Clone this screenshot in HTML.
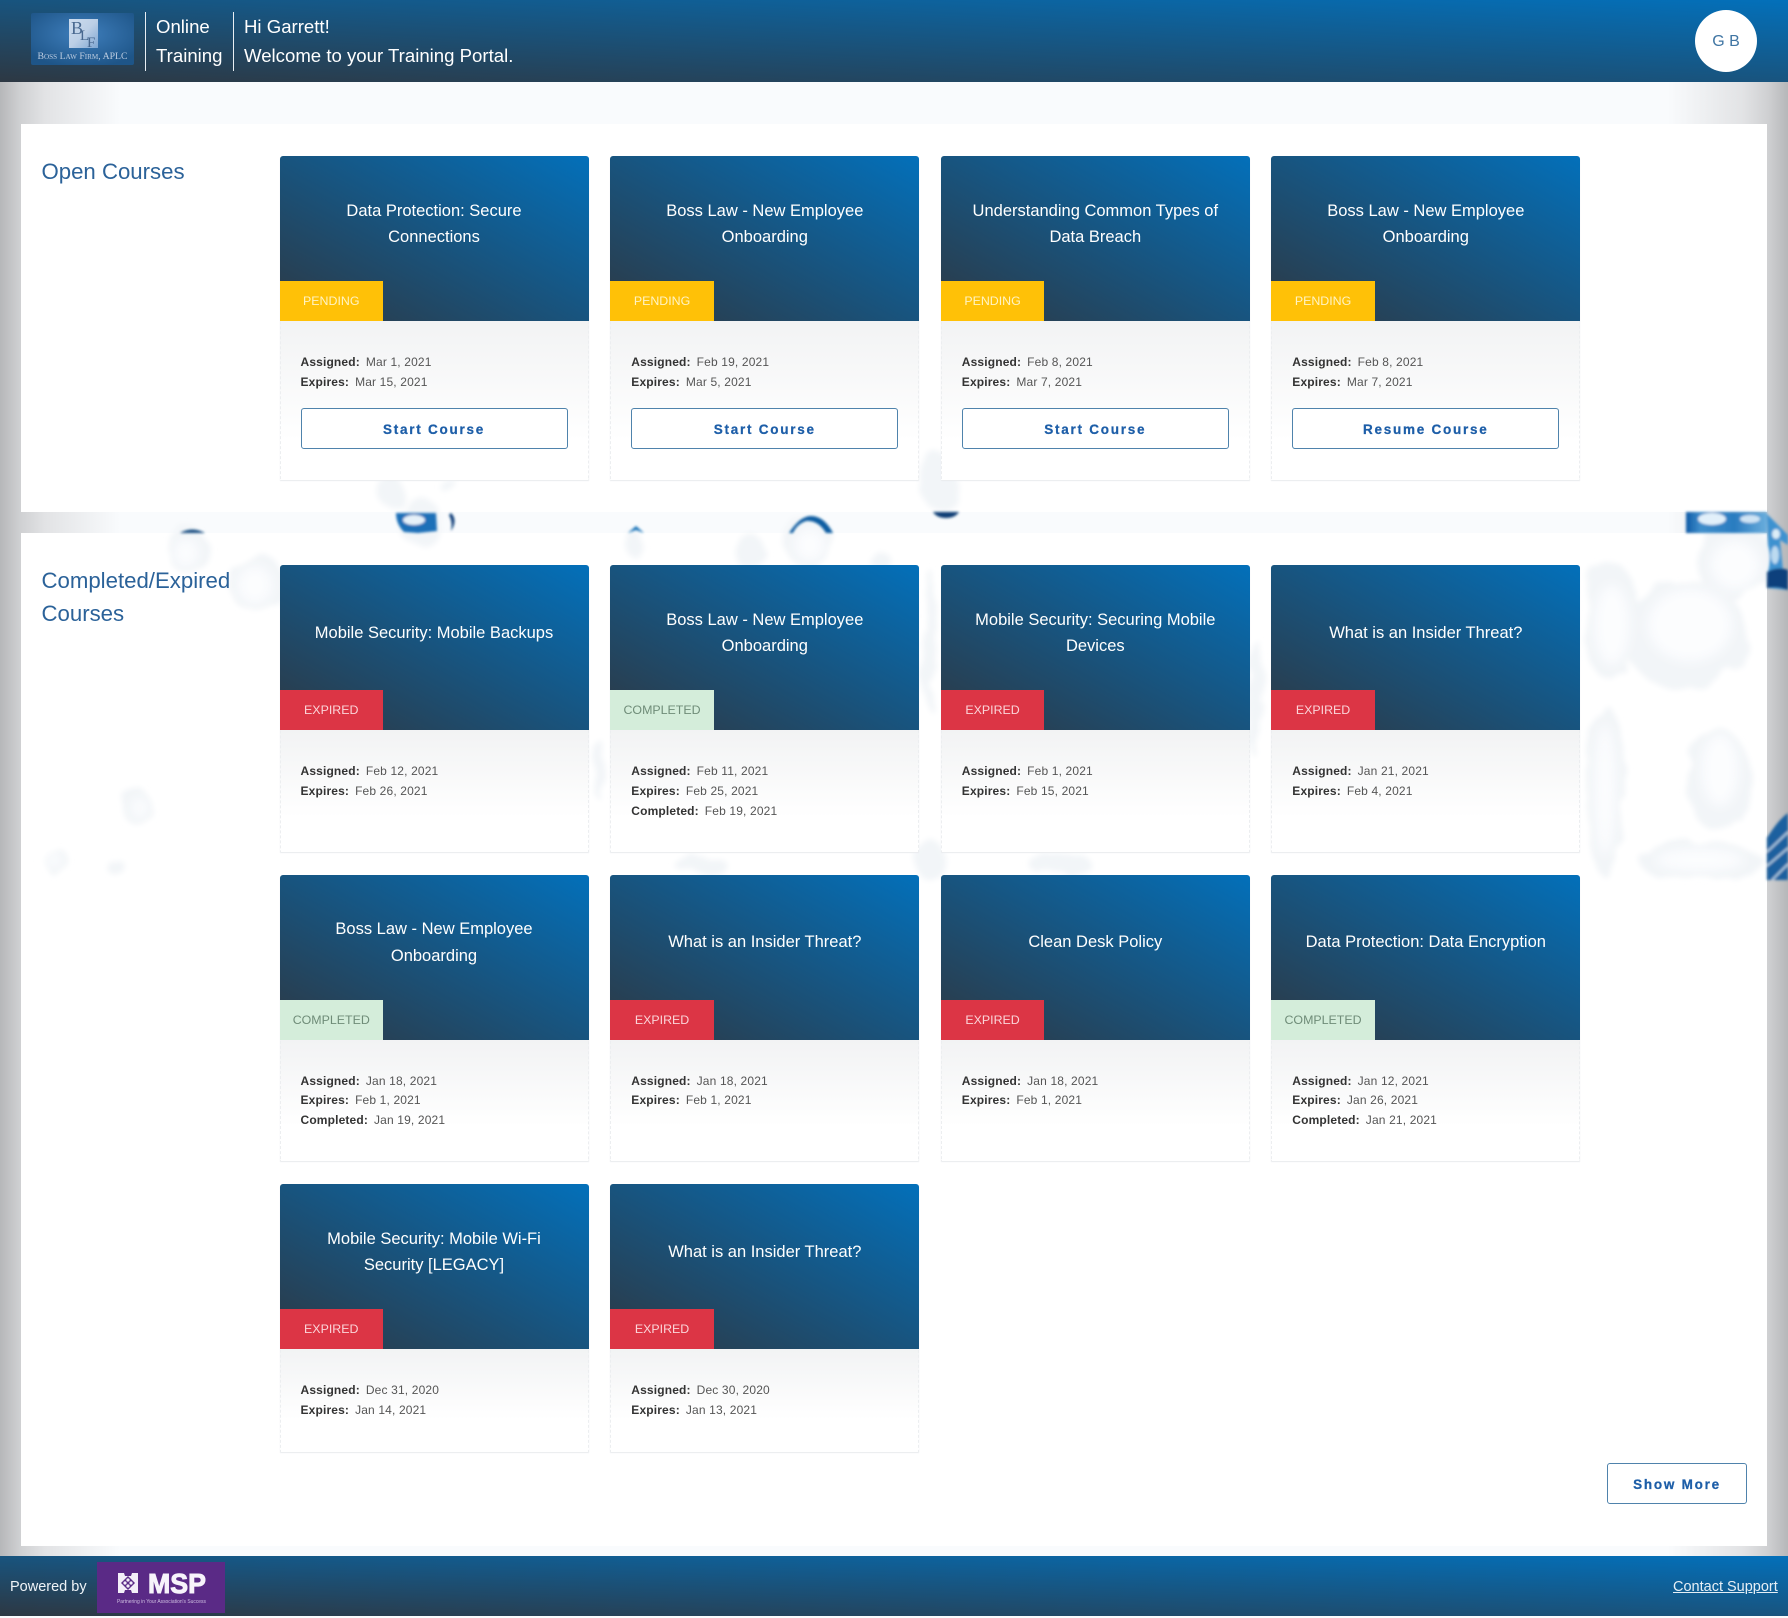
<!DOCTYPE html>
<html lang="en">
<head>
<meta charset="utf-8">
<title>Training Portal</title>
<style>
*{box-sizing:border-box}
html,body{margin:0;padding:0}
body{width:1788px;height:1616px;position:relative;overflow:hidden;font-family:"Liberation Sans",Arial,sans-serif;background:#f9fbfd}
.abs{position:absolute}
.edgeL{position:absolute;left:0;top:0;width:120px;height:1616px;background:linear-gradient(to right,#b6b7b9 0,#cfd0d2 20px,#e2e3e5 45px,#f9fbfd 100%)}
.edgeR{position:absolute;right:0;top:0;width:120px;height:1616px;background:linear-gradient(to left,#b6b7b9 0,#cfd0d2 20px,#e2e3e5 45px,#f9fbfd 100%)}
.panel{position:absolute;left:21px;width:1746px;background:#fff}
.bar{position:absolute;left:0;width:1788px;background:linear-gradient(to bottom left,#0370ba,#2d3843)}
.hdr{top:0;height:82px;color:#fff;font-size:18.6px;line-height:29px}
.ftr{top:1556px;height:60px;color:#fff}
.sep{position:absolute;top:12px;width:1px;height:59px;background:#e8eef3}
.sec{position:absolute;left:41.5px;width:210px;font-size:22.2px;line-height:33.3px;color:#2b6299}
.card{position:absolute;width:309px;background:linear-gradient(to bottom,#f2f3f4 165px,#fff 88%);border-radius:3px 3px 0 0;box-shadow:0 1px 1px #e9ebee;border-left:1px dashed #eceef0;border-right:1px dashed #eceef0}
.img{position:absolute;left:-1px;top:0;width:309px;height:165px;background:linear-gradient(to bottom left,#0370ba,#2d3843);border-radius:3px 3px 0 0;overflow:hidden}
.t{position:absolute;left:0;top:1px;width:309px;height:134px;padding:0 20px;display:flex;align-items:center;justify-content:center;text-align:center;color:#fff;font-size:16.5px;line-height:26.3px}
.b{position:absolute;left:0;bottom:0;width:103.5px;height:40px;line-height:40px;text-align:center;font-size:12.4px}
.p{background:#ffc107;color:#fff3c4}
.e{background:#dc3545;color:#fbd5d9}
.c{background:#d4edda;color:#6f8c78}
.m{position:absolute;left:20px;top:197px;font-size:12px;line-height:19.8px;color:#555;letter-spacing:.15px;white-space:nowrap}
.m b{color:#333;margin-right:6px}
.btn{position:absolute;background:#fff;border:1px solid #4f83ac;border-radius:3px;height:41px;line-height:41px;text-align:center;font-size:13.5px;font-weight:bold;letter-spacing:1.75px;color:#1d5ea8;-webkit-text-stroke:.25px #1d5ea8}
.card .btn{left:20px;top:252px;width:267px}
</style>
</head>
<body>
<div class="edgeL"></div><div class="edgeR"></div>
<div class="panel" style="top:124px;height:388px"></div>
<div class="panel" style="top:533px;height:1013px"></div>

<svg class="abs" style="left:0;top:0" width="1788" height="1616" viewBox="0 0 1788 1616">
<defs>
<filter id="s" x="-30%" y="-30%" width="160%" height="160%"><feTurbulence type="fractalNoise" baseFrequency=".03" numOctaves="3" seed="7" result="n"/><feDisplacementMap in="SourceGraphic" in2="n" scale="18" result="d"/><feGaussianBlur in="d" stdDeviation="3"/></filter>
<filter id="s3" x="-30%" y="-30%" width="160%" height="160%"><feGaussianBlur stdDeviation="6"/></filter>
<filter id="s2"><feGaussianBlur stdDeviation="1.4"/></filter>
<linearGradient id="bl" x1="0" y1="0" x2="1" y2="0"><stop offset="0" stop-color="#0f5aa6"/><stop offset=".18" stop-color="#3f8ecb"/><stop offset=".6" stop-color="#2a7cc0"/><stop offset="1" stop-color="#6aaedd"/></linearGradient>
</defs>
<g fill="#f2f5f8" filter="url(#s)">
<ellipse cx="188" cy="551" rx="20" ry="22"/><ellipse cx="257" cy="583" rx="27" ry="30"/>
<ellipse cx="138" cy="808" rx="15" ry="17"/><ellipse cx="55" cy="860" rx="12" ry="13"/><ellipse cx="117" cy="868" rx="9" ry="8"/>
<ellipse cx="392" cy="492" rx="13" ry="16"/><ellipse cx="421" cy="523" rx="22" ry="24"/><ellipse cx="447" cy="484" rx="9" ry="6"/>
<ellipse cx="633" cy="542" rx="9" ry="14"/><ellipse cx="810" cy="543" rx="24" ry="25"/><ellipse cx="751" cy="553" rx="15" ry="17"/><ellipse cx="880" cy="560" rx="11" ry="8"/>
<ellipse cx="938" cy="482" rx="20" ry="33" transform="rotate(-18 938 482)"/>
<ellipse cx="1610" cy="620" rx="27" ry="60"/><ellipse cx="1685" cy="635" rx="62" ry="54"/><ellipse cx="1735" cy="560" rx="38" ry="40"/>
<ellipse cx="1718" cy="780" rx="30" ry="52"/><ellipse cx="1605" cy="790" rx="20" ry="86"/><ellipse cx="1700" cy="860" rx="62" ry="20"/>
<ellipse cx="930" cy="860" rx="15" ry="20"/><ellipse cx="700" cy="864" rx="26" ry="10"/><ellipse cx="1060" cy="864" rx="32" ry="10"/><ellipse cx="1258" cy="700" rx="6" ry="60"/><ellipse cx="930" cy="640" rx="7" ry="70"/><ellipse cx="600" cy="770" rx="6" ry="30"/>
</g>
<g fill="#fcfdfe" filter="url(#s3)">
<ellipse cx="186" cy="553" rx="12" ry="14"/><ellipse cx="255" cy="585" rx="17" ry="19"/><ellipse cx="140" cy="808" rx="8" ry="11"/><ellipse cx="54" cy="860" rx="8" ry="8"/>
<ellipse cx="810" cy="545" rx="15" ry="16"/><ellipse cx="1612" cy="625" rx="17" ry="40"/><ellipse cx="1690" cy="625" rx="42" ry="36"/><ellipse cx="1720" cy="770" rx="18" ry="36"/><ellipse cx="1700" cy="860" rx="44" ry="11"/><ellipse cx="1735" cy="565" rx="24" ry="24"/><ellipse cx="1605" cy="790" rx="10" ry="66"/>
</g>
<g filter="url(#s2)">
<path d="M396 513 H436 L437 531 L418 533 L404 532 Q396 524 396 513Z" fill="#1a6fb8"/>
<ellipse cx="414" cy="520" rx="11" ry="5" fill="#e6f1f9"/>
<path d="M451 513 Q458 520 451 531 Q453 522 449 515Z" fill="#0c3e78"/>
<path d="M628 533 L636 526 L644 533 L636 530Z" fill="#1771b8"/>
<path d="M789 533 Q800 516 811 516 Q824 516 833 533 L826 533 Q818 520 806 521 Q797 524 793 533Z" fill="#0f5da2"/>
<path d="M933 512 H959 Q955 518 946 518 Q937 518 933 512Z" fill="#0d3e74"/>
<path d="M180 533 Q192 526 205 533Z" fill="#164b80"/>
<path d="M1686 512 H1767 V533 H1686Z" fill="url(#bl)"/>
<ellipse cx="1712" cy="519" rx="14" ry="6" fill="#e2f0fa"/><ellipse cx="1750" cy="519" rx="10" ry="4" fill="#cfe4f4"/>
<path d="M1767 514 L1788 535 V545 L1780 540 L1783 570 L1788 575 V590 L1767 588 V575 Q1772 560 1768 545Z" fill="#3d92d0"/>
<ellipse cx="1776" cy="534" rx="4" ry="5" fill="#dcedf8"/><ellipse cx="1775" cy="555" rx="4" ry="9" fill="#bcdaf0"/>
<path d="M1767 572 Q1778 566 1788 570 V590 Q1777 586 1767 588Z" fill="#0b3f7c"/>
<path d="M1767 838 Q1778 820 1788 813 V880 H1767Z" fill="#1a619f"/>
<path d="M1767 852 L1788 832 M1767 866 L1788 848 M1772 880 L1788 864" stroke="#cfe2f0" stroke-width="2" opacity=".8"/>
</g>
</svg>

<div class="bar hdr">
<svg class="abs" style="left:31px;top:13px" width="103" height="52" viewBox="0 0 103 52">
<defs>
<radialGradient id="lg" cx=".5" cy=".4" r=".65"><stop offset="0" stop-color="#3f7fbd"/><stop offset="1" stop-color="#1e5588"/></radialGradient>
<linearGradient id="sq" x1="0" y1="0" x2="1" y2="1"><stop offset="0" stop-color="#cddcee"/><stop offset=".5" stop-color="#bccfe6"/><stop offset="1" stop-color="#7ea6d2"/></linearGradient>
</defs>
<rect width="103" height="52" rx="2" fill="url(#lg)"/>
<rect x="38" y="6" width="29" height="29" fill="url(#sq)"/>
<text x="40" y="21" font-family="Liberation Serif,serif" font-size="18" fill="#48688f">B</text>
<text x="49" y="27" font-family="Liberation Serif,serif" font-size="15" fill="#48688f">L</text>
<text x="56" y="34" font-family="Liberation Serif,serif" font-size="15" fill="#48688f">F</text>
<text x="51.5" y="46" text-anchor="middle" font-family="Liberation Serif,serif" font-size="9.5" textLength="90" lengthAdjust="spacingAndGlyphs" fill="#bccce0" style="font-variant:small-caps">Boss Law Firm, APLC</text>
</svg>
<div class="sep" style="left:145px"></div>
<div class="abs" style="left:156px;top:12px;white-space:nowrap">Online<br>Training</div>
<div class="sep" style="left:233px"></div>
<div class="abs" style="left:244px;top:12px;white-space:nowrap">Hi Garrett!<br>Welcome to your Training Portal.</div>
<div class="abs" style="left:1695px;top:10px;width:62px;height:62px;border-radius:50%;background:#fff;color:#3f75a3;font-size:16px;line-height:64px;text-align:center">G B</div>
</div>

<div class="sec" style="top:155px">Open Courses</div>
<div class="sec" style="top:564px">Completed/Expired Courses</div>

<div class="card" style="left:279.5px;top:156px;height:324px"><div class="img"><div class="t">Data Protection: Secure Connections</div><div class="b p">PENDING</div></div><div class="m"><b>Assigned:</b>Mar 1, 2021<br><b>Expires:</b>Mar 15, 2021</div><div class="btn">Start Course</div></div>
<div class="card" style="left:610.3px;top:156px;height:324px"><div class="img"><div class="t">Boss Law - New Employee Onboarding</div><div class="b p">PENDING</div></div><div class="m"><b>Assigned:</b>Feb 19, 2021<br><b>Expires:</b>Mar 5, 2021</div><div class="btn">Start Course</div></div>
<div class="card" style="left:940.8px;top:156px;height:324px"><div class="img"><div class="t">Understanding Common Types of Data Breach</div><div class="b p">PENDING</div></div><div class="m"><b>Assigned:</b>Feb 8, 2021<br><b>Expires:</b>Mar 7, 2021</div><div class="btn">Start Course</div></div>
<div class="card" style="left:1271.3px;top:156px;height:324px"><div class="img"><div class="t">Boss Law - New Employee Onboarding</div><div class="b p">PENDING</div></div><div class="m"><b>Assigned:</b>Feb 8, 2021<br><b>Expires:</b>Mar 7, 2021</div><div class="btn">Resume Course</div></div>

<div class="card" style="left:279.5px;top:565px;height:287px"><div class="img"><div class="t">Mobile Security: Mobile Backups</div><div class="b e">EXPIRED</div></div><div class="m"><b>Assigned:</b>Feb 12, 2021<br><b>Expires:</b>Feb 26, 2021</div></div>
<div class="card" style="left:610.3px;top:565px;height:287px"><div class="img"><div class="t">Boss Law - New Employee Onboarding</div><div class="b c">COMPLETED</div></div><div class="m"><b>Assigned:</b>Feb 11, 2021<br><b>Expires:</b>Feb 25, 2021<br><b>Completed:</b>Feb 19, 2021</div></div>
<div class="card" style="left:940.8px;top:565px;height:287px"><div class="img"><div class="t">Mobile Security: Securing Mobile Devices</div><div class="b e">EXPIRED</div></div><div class="m"><b>Assigned:</b>Feb 1, 2021<br><b>Expires:</b>Feb 15, 2021</div></div>
<div class="card" style="left:1271.3px;top:565px;height:287px"><div class="img"><div class="t">What is an Insider Threat?</div><div class="b e">EXPIRED</div></div><div class="m"><b>Assigned:</b>Jan 21, 2021<br><b>Expires:</b>Feb 4, 2021</div></div>

<div class="card" style="left:279.5px;top:874.5px;height:286.5px"><div class="img"><div class="t">Boss Law - New Employee Onboarding</div><div class="b c">COMPLETED</div></div><div class="m"><b>Assigned:</b>Jan 18, 2021<br><b>Expires:</b>Feb 1, 2021<br><b>Completed:</b>Jan 19, 2021</div></div>
<div class="card" style="left:610.3px;top:874.5px;height:286.5px"><div class="img"><div class="t">What is an Insider Threat?</div><div class="b e">EXPIRED</div></div><div class="m"><b>Assigned:</b>Jan 18, 2021<br><b>Expires:</b>Feb 1, 2021</div></div>
<div class="card" style="left:940.8px;top:874.5px;height:286.5px"><div class="img"><div class="t">Clean Desk Policy</div><div class="b e">EXPIRED</div></div><div class="m"><b>Assigned:</b>Jan 18, 2021<br><b>Expires:</b>Feb 1, 2021</div></div>
<div class="card" style="left:1271.3px;top:874.5px;height:286.5px"><div class="img"><div class="t">Data Protection: Data Encryption</div><div class="b c">COMPLETED</div></div><div class="m"><b>Assigned:</b>Jan 12, 2021<br><b>Expires:</b>Jan 26, 2021<br><b>Completed:</b>Jan 21, 2021</div></div>

<div class="card" style="left:279.5px;top:1184px;height:268px"><div class="img"><div class="t">Mobile Security: Mobile Wi-Fi Security [LEGACY]</div><div class="b e">EXPIRED</div></div><div class="m"><b>Assigned:</b>Dec 31, 2020<br><b>Expires:</b>Jan 14, 2021</div></div>
<div class="card" style="left:610.3px;top:1184px;height:268px"><div class="img"><div class="t">What is an Insider Threat?</div><div class="b e">EXPIRED</div></div><div class="m"><b>Assigned:</b>Dec 30, 2020<br><b>Expires:</b>Jan 13, 2021</div></div>

<div class="btn" style="left:1607px;top:1463px;width:140px">Show More</div>

<div class="bar ftr">
<div class="abs" style="left:10px;top:0;line-height:62px;font-size:14.5px;color:#eef3f7">Powered by</div>
<svg class="abs" style="left:97px;top:6px" width="128" height="51" viewBox="0 0 128 51">
<rect width="128" height="51" fill="#5a2a86"/>
<path d="M21 11 H27 L28 14 H34 L35 11 H41 V31 H35 L34 28 H28 L27 31 H21Z" fill="#f3eef8"/>
<path d="M31 14 L38 21 L31 28 L24 21Z" fill="#5a2a86"/>
<circle cx="31" cy="18" r="1.6" fill="#f3eef8"/><circle cx="31" cy="24" r="1.6" fill="#f3eef8"/><circle cx="28" cy="21" r="1.6" fill="#f3eef8"/><circle cx="34" cy="21" r="1.6" fill="#f3eef8"/>
<text x="51" y="31" font-family="Liberation Sans,sans-serif" font-weight="bold" font-size="28" textLength="58" lengthAdjust="spacingAndGlyphs" fill="#f7f3fb" stroke="#f7f3fb" stroke-width="1">MSP</text>
<text x="20" y="41" font-family="Liberation Sans,sans-serif" font-size="5" textLength="89" lengthAdjust="spacingAndGlyphs" fill="#cdbde0">Partnering in Your Association's Success</text>
</svg>
<div class="abs" style="left:1673px;top:0;line-height:62px;font-size:14.5px;color:#e6eff6;text-decoration:underline;white-space:nowrap">Contact Support</div>
</div>
</body>
</html>
